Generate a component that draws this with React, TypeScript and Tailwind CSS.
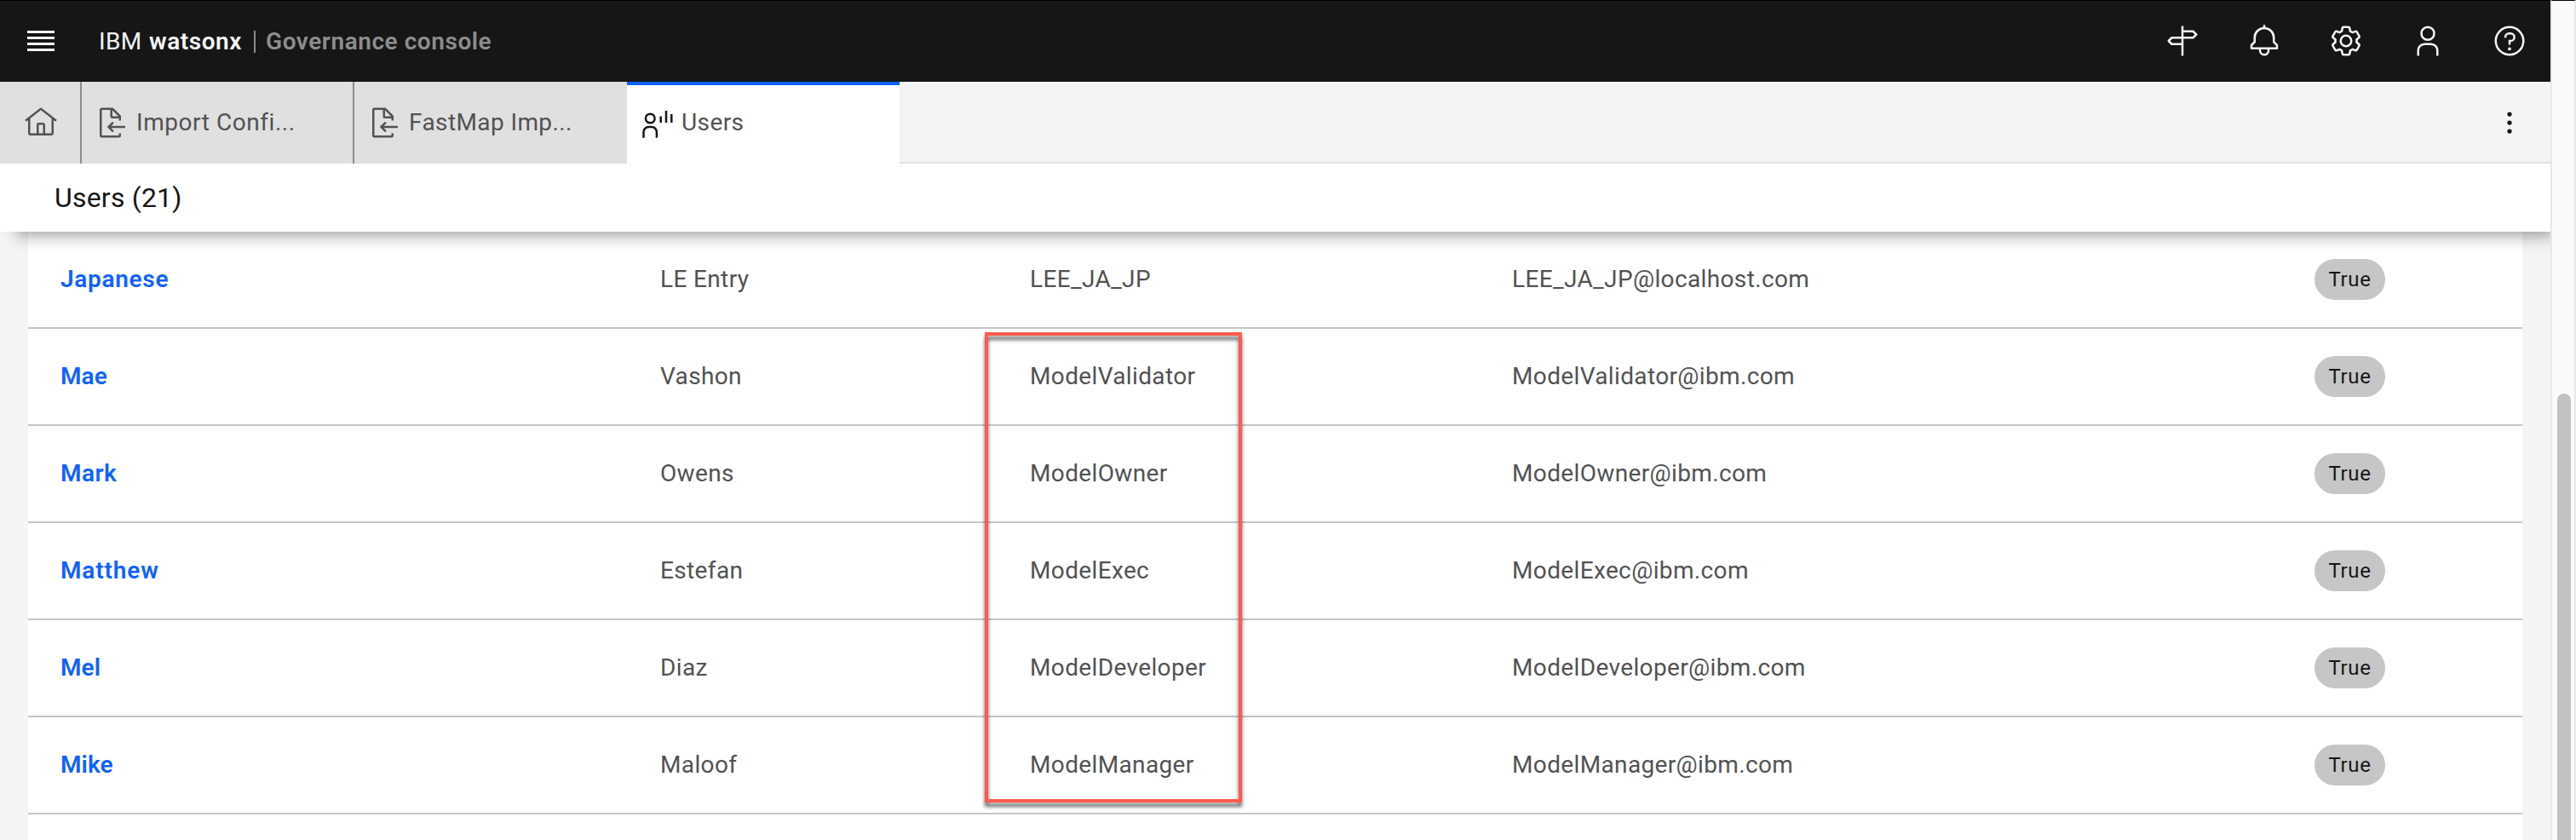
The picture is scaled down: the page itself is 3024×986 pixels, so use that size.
import React from "react";

type P = { className?: string; children: React.ReactNode };

function Icon({ className = "size-10", children }: P) {
  return (
    <svg viewBox="0 0 32 32" fill="currentColor" className={className + " shrink-0"}>
      {children}
    </svg>
  );
}

function DocumentImport() {
  return (
    <Icon>
      <path d="M28 19 14.83 19 17.41 16.41 16 15 11 20 16 25 17.41 23.59 14.83 21 28 21 28 19z" />
      <path d="M24,14V10a1,1,0,0,0-.29-.71l-7-7A1,1,0,0,0,16,2H6A2,2,0,0,0,4,4V28a2,2,0,0,0,2,2H22a2,2,0,0,0,2-2V26H22v2H6V4h8v6a2,2,0,0,0,2,2h6v2Zm-8-4V4.41L21.59,10Z" />
    </Icon>
  );
}

const rows = [
  { first: "Japanese", last: "LE Entry", user: "LEE_JA_JP", email: "LEE_JA_JP@localhost.com", spacing: "tracking-[0.7px]" },
  { first: "Mae", last: "Vashon", user: "ModelValidator", email: "ModelValidator@ibm.com", spacing: "tracking-[0.1px]" },
  { first: "Mark", last: "Owens", user: "ModelOwner", email: "ModelOwner@ibm.com", spacing: "tracking-[0.5px]" },
  { first: "Matthew", last: "Estefan", user: "ModelExec", email: "ModelExec@ibm.com", spacing: "tracking-[0.85px]" },
  { first: "Mel", last: "Diaz", user: "ModelDeveloper", email: "ModelDeveloper@ibm.com", spacing: "tracking-[0.1px]" },
  { first: "Mike", last: "Maloof", user: "ModelManager", email: "ModelManager@ibm.com", spacing: "tracking-[0.1px]" },
];

function Header() {
  return (
    <header className="flex h-24 shrink-0 items-center bg-[#161616] text-[#f4f4f4] shadow-[inset_0_1px_0_#000]">
      <div className="flex w-24 items-center justify-center">
        <div className="flex h-6 w-8 flex-col justify-between">
          <div className="h-[3px] bg-[#f4f4f4]" />
          <div className="h-[3px] bg-[#f4f4f4]" />
          <div className="h-[3px] bg-[#f4f4f4]" />
          <div className="h-[3px] bg-[#f4f4f4]" />
        </div>
      </div>
      <div className="ml-5 flex items-center whitespace-pre pt-0.5 text-[28px]">
        <span className="w-[59px] tracking-[0.3px]">IBM</span>
        <span className="w-[123px] font-semibold tracking-[0.55px]">watsonx</span>
        <span className="mr-3 h-[26px] w-0.5 bg-[#8d8d8d]" />
        <span className="font-semibold tracking-[0.55px] text-[#8d8d8d]">Governance console</span>
      </div>
      <div className="ml-auto flex">
        <div className="flex w-24 justify-center">
          <Icon>
            <path
              d="M16 2V30M16 7H26L29 10L26 13H6L3 16L6 19H16"
              fill="none"
              stroke="currentColor"
              strokeWidth="2"
              strokeLinejoin="round"
            />
          </Icon>
        </div>
        <div className="flex w-24 justify-center">
          <Icon>
            <path d="M28.7071,19.293,26,16.5859V13a10.0136,10.0136,0,0,0-9-9.9492V1H15V3.0508A10.0136,10.0136,0,0,0,6,13v3.5859L3.2929,19.293A1,1,0,0,0,3,20v3a1,1,0,0,0,1,1h7v.7768a5.152,5.152,0,0,0,4.5,5.1987A5.0057,5.0057,0,0,0,21,25V24h7a1,1,0,0,0,1-1V20A1,1,0,0,0,28.7071,19.293ZM19,25a3,3,0,0,1-6,0V24h6Zm8-3H5V20.4141L7.707,17.707A1,1,0,0,0,8,17V13a8,8,0,0,1,16,0v4a1,1,0,0,0,.293.707L27,20.4141Z" />
          </Icon>
        </div>
        <div className="flex w-24 justify-center">
          <Icon>
            <path d="M27,16.76c0-.25,0-.5,0-.76s0-.51,0-.77l1.92-1.68A2,2,0,0,0,29.3,11L26.94,7a2,2,0,0,0-1.73-1,2,2,0,0,0-.64.1l-2.43.82a11.35,11.35,0,0,0-1.31-.75l-.51-2.52a2,2,0,0,0-2-1.61H13.64a2,2,0,0,0-2,1.61l-.51,2.52a11.48,11.48,0,0,0-1.32.75L7.43,6.06A2,2,0,0,0,6.79,6,2,2,0,0,0,5.06,7L2.7,11a2,2,0,0,0,.41,2.51L5,15.24c0,.25,0,.5,0,.76s0,.51,0,.77L3.11,18.45A2,2,0,0,0,2.7,21L5.06,25a2,2,0,0,0,1.73,1,2,2,0,0,0,.64-.1l2.43-.82a11.35,11.35,0,0,0,1.31.75l.51,2.52a2,2,0,0,0,2,1.61h4.72a2,2,0,0,0,2-1.61l.51-2.52a11.48,11.48,0,0,0,1.32-.75l2.42.82a2,2,0,0,0,.64.1,2,2,0,0,0,1.73-1L29.3,21a2,2,0,0,0-.41-2.51ZM25.21,24l-3.43-1.16a8.86,8.86,0,0,1-2.71,1.57L18.36,28H13.64l-.71-3.55a9.36,9.36,0,0,1-2.7-1.57L6.79,24,4.43,20l2.72-2.4a8.9,8.9,0,0,1,0-3.13L4.43,12,6.79,8l3.43,1.16a8.86,8.86,0,0,1,2.71-1.57L13.64,4h4.72l.71,3.55a9.36,9.36,0,0,1,2.7,1.57L25.21,8,27.57,12l-2.72,2.4a8.9,8.9,0,0,1,0,3.13L27.57,20Z" />
            <path d="M16,22a6,6,0,1,1,6-6A5.94,5.94,0,0,1,16,22Zm0-10a3.91,3.91,0,0,0-4,4,3.91,3.91,0,0,0,4,4,3.91,3.91,0,0,0,4-4A3.91,3.91,0,0,0,16,12Z" />
          </Icon>
        </div>
        <div className="flex w-24 justify-center">
          <Icon>
            <path d="M16,4a5,5,0,1,1-5,5,5,5,0,0,1,5-5m0-2a7,7,0,1,0,7,7A7,7,0,0,0,16,2Z" />
            <path d="M26,30H24V25a5,5,0,0,0-5-5H13a5,5,0,0,0-5,5v5H6V25a7,7,0,0,1,7-7h6a7,7,0,0,1,7,7Z" />
          </Icon>
        </div>
        <div className="flex w-24 justify-center">
          <Icon>
            <path d="M16,2A14,14,0,1,0,30,16,14,14,0,0,0,16,2Zm0,26A12,12,0,1,1,28,16,12,12,0,0,1,16,28Z" />
            <circle cx="16" cy="23.5" r="1.5" />
            <path d="M17,8H15.5A4.49,4.49,0,0,0,11,12.5V13h2v-.5A2.5,2.5,0,0,1,15.5,10H17a2.5,2.5,0,0,1,0,5H15v4.5h2V17a4.5,4.5,0,0,0,0-9Z" />
          </Icon>
        </div>
      </div>
    </header>
  );
}

function Tabs() {
  return (
    <nav className="relative z-20 flex h-24 shrink-0 bg-[#f4f4f4] text-[28px] text-[#525252]">
      <div className="flex w-24 items-center justify-center border-r-2 border-[#8d8d8d] bg-[#e0e0e0] pl-0.5">
        <Icon>
          <path d="M16.6123,2.2138a1.01,1.01,0,0,0-1.2427,0L1,13.4194l1.2427,1.5717L4,13.6209V26a2.0041,2.0041,0,0,0,2,2H26a2.0037,2.0037,0,0,0,2-2V13.63L29.7573,15,31,13.4282ZM18,26H14V18h4Zm2,0V18a2.0023,2.0023,0,0,0-2-2H14a2.002,2.002,0,0,0-2,2v8H6V12.0615l10-7.79,10,7.8005V26Z" />
        </Icon>
      </div>
      <div className="flex w-80 items-center gap-2 border-r-2 border-[#8d8d8d] bg-[#e0e0e0] pl-4">
        <DocumentImport />
        <span className="whitespace-nowrap tracking-[0.55px]">Import Confi...</span>
      </div>
      <div className="flex w-80 items-center gap-2 bg-[#e0e0e0] pl-4">
        <DocumentImport />
        <span className="whitespace-nowrap tracking-[0.4px]">FastMap Imp...</span>
      </div>
      <div className="flex w-80 items-center gap-2.5 border-t-4 border-[#0f62fe] bg-white pb-1 pl-[14px]">
        <svg
          viewBox="0 0 40 40"
          fill="none"
          stroke="currentColor"
          strokeWidth="2.5"
          className="size-10 shrink-0 text-[#161616]"
        >
          <circle cx="13.3" cy="15" r="5.3" />
          <path d="M5.5 37.7V31a6 6 0 0 1 6-6h3.4a6 6 0 0 1 6 6v6.7" />
          <path d="M25.7 12.5V20M32 6V20M38.3 10V20" />
        </svg>
        <span className="tracking-[0.4px]">Users</span>
      </div>
      <div className="flex grow items-center justify-end border-b-2 border-[#e0e0e0] pr-7 pt-0.5 text-[#161616]">
        <Icon>
          <circle cx="16" cy="8" r="2.1" />
          <circle cx="16" cy="16" r="2.1" />
          <circle cx="16" cy="24" r="2.1" />
        </Icon>
      </div>
    </nav>
  );
}

export default function App() {
  return (
    <div className="flex h-[986px] w-[3024px] overflow-hidden bg-[#f4f4f4] font-[Roboto,sans-serif]">
      <div className="flex w-[2994px] flex-col overflow-hidden">
        <Header />
        <Tabs />
        <div className="z-10 flex h-20 shrink-0 items-center bg-white pl-16 text-[32px] text-[#161616] shadow-[12px_12px_18px_-8px_rgba(0,0,0,0.4)]">
          <span className="tracking-[0.2px]">Users (21)</span>
        </div>
        <main className="relative mx-[33px] flex grow flex-col bg-white text-[28px] text-[#525252]">
          {rows.map((r) => (
            <div
              key={r.first}
              className="flex h-[114px] shrink-0 items-center border-b-2 border-[#c6c6c6] pl-[38px] tracking-[0.36px]"
            >
              <div className="w-[704px] text-[#0f62fe]">
                <span className={"font-semibold " + r.spacing}>{r.first}</span>
              </div>
              <div className="w-[434px]">{r.last}</div>
              <div className="w-[566px]">{r.user}</div>
              <div className="w-[942px]">{r.email}</div>
              <div className="flex h-12 w-[83px] items-center justify-center rounded-full bg-[#c6c6c6] text-2xl tracking-[0.6px] text-[#161616]">
                True
              </div>
            </div>
          ))}
          <div className="absolute left-[1123px] top-[118px] h-[552px] w-[302px] border-4 border-[#ff5a4d] drop-shadow-[0_5px_2px_rgba(0,0,0,0.6)]" />
        </main>
      </div>
      <div className="flex grow border-x-2 border-[#e8e8e8] border-t border-t-black bg-[#fafafa] pl-[6px] pt-[461px]">
        <div className="h-[600px] w-4 rounded-full bg-[#c1c1c1]" />
      </div>
    </div>
  );
}
